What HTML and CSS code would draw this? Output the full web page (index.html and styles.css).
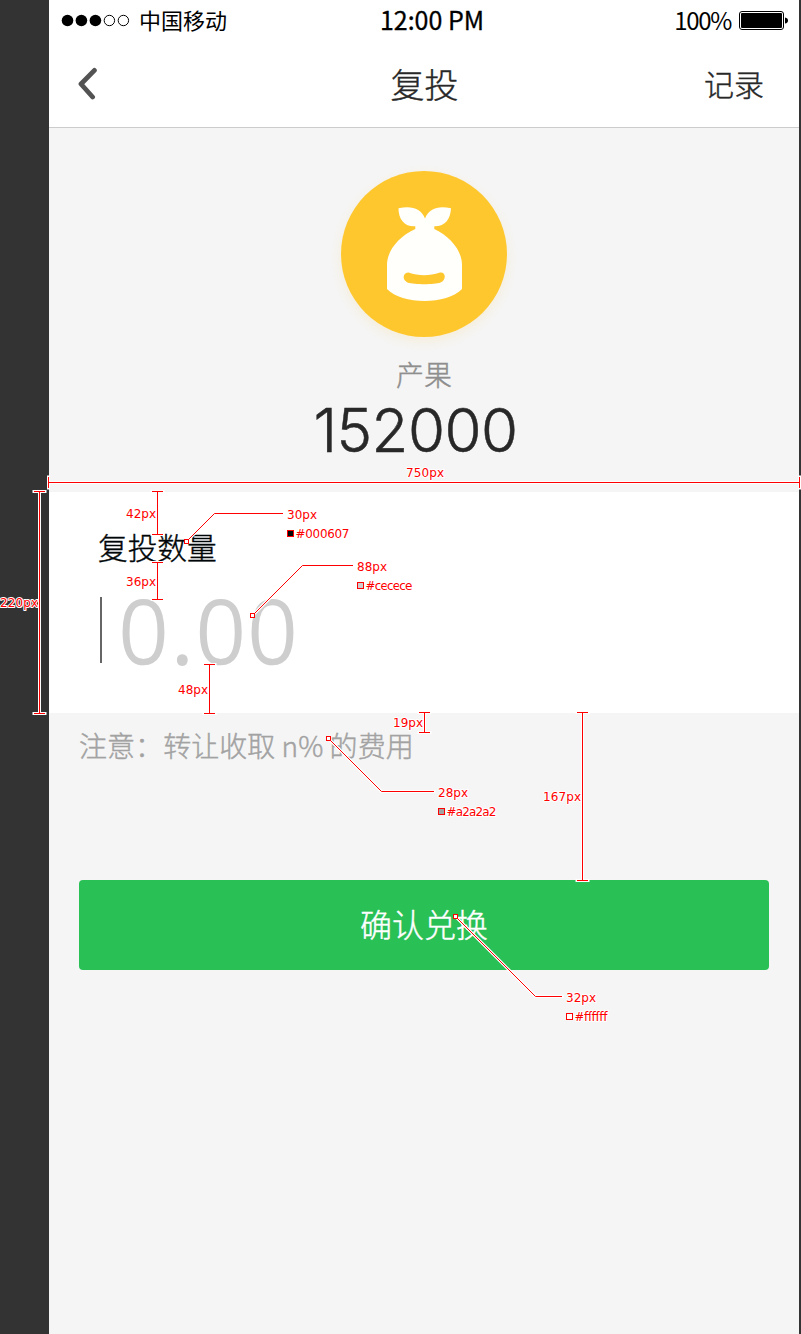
FILE: index.html
```html
<!DOCTYPE html>
<html lang="zh-CN">
<head>
<meta charset="utf-8">
<title>复投</title>
<link rel="stylesheet" href="styles.css">
</head>
<body>
<div class="board">
  <main class="phone">
    <header class="header">
      <div class="status">
        <div class="carrier">
          <svg class="signal" width="70" height="14" viewBox="0 0 70 14">
            <g fill="#000"><circle cx="6.5" cy="7.500" r="5.800"/><circle cx="20.400" cy="7.500" r="5.800"/><circle cx="34.400" cy="7.500" r="5.800"/></g>
            <g fill="none" stroke="#000"><circle cx="48.400" cy="7.500" r="5.200"/><circle cx="62.400" cy="7.500" r="5.200"/></g>
          </svg>
          <span class="carrier-name">中国移动</span>
        </div>
        <div class="clock">12:00 PM</div>
        <div class="power">
          <span class="percent">100%</span>
          <svg class="battery" width="50" height="20" viewBox="0 0 50 20">
            <rect x=".5" y=".5" width="44" height="18" rx="2.5" fill="#fff" stroke="#000"/>
            <rect x="2" y="2" width="41" height="15" rx="1" fill="#000"/>
            <path d="M46 6.5Q49 7 49 9.5T46 12.5Z" fill="#000"/>
          </svg>
        </div>
      </div>
      <nav class="nav">
        <svg class="back" width="20" height="34" viewBox="0 0 20 34"><path d="M16.400 3.400L3 17L14.600 30" fill="none" stroke="#535353" stroke-width="4.800" stroke-linecap="round" stroke-linejoin="round"/></svg>
        <h1 class="title">复投</h1>
        <a class="record">记录</a>
      </nav>
    </header>

    <section class="asset">
      <div class="badge">
        <svg width="166" height="166" viewBox="0 0 166 166">
          <path fill="#fffffc" fill-rule="evenodd" d="M57.500 37.300C70 34.500 80 37 84 47.500C88 37 98 34.500 110 37.300C109.500 48 104.500 55.500 93.300 55.300V58C110 66 121 80 121 94V118C106 134 61 134 46 118V94C46 80 57 66 74.300 58V55.300C63 56 57.500 48 57.500 37.300ZM67.500 101.500C62 101 60.500 109 66.500 111.500C74 113.800 93 113.800 99.500 111.500C105.500 109 105 100.500 99 101.500C88 105.200 78 105.200 67.500 101.500Z"/>
        </svg>
      </div>
      <p class="asset-name">产果</p>
      <p class="asset-total">152000</p>
    </section>

    <section class="amount">
      <label class="amount-label">复投数量</label>
      <div class="amount-field"><span class="caret"></span><span class="placeholder">0<span class="point">.</span>00</span></div>
    </section>

    <p class="notice">注意：转让收取 n% 的费用</p>
    <button class="confirm">确认兑换</button>
  </main>

  <svg class="specs" width="801" height="1334" viewBox="0 0 801 1334">
    <defs>
      <path id="marks" d="M48.500 477V488M48.500 482.500H799.500M799.500 477V488
        M34 491.500H45M39.500 491.500V713.500M34 713.500H45
        M152 491.500H163M157.500 491.500V534.500M152 534.500H163
        M152 562.500H163M157.500 562.500V599.500M152 599.500H163
        M204 664.500H215M209.500 664.500V713.500M204 713.500H215
        M419 712.500H430M424.500 712.500V732.500M419 732.500H430
        M577 712.500H588M582.500 712.500V880.500M577 880.500H588"/>
      <path id="leaders" d="M188 540L214.500 513.500H283M254 614L302.500 565.500H353M330 740L381.500 791.500H434M457 918L535.500 996.500H562"/>
    </defs>
    <use href="#marks" class="halo"/>
    <use href="#leaders" class="halo"/>
    <use href="#marks" class="line crisp"/>
    <use href="#leaders" class="line"/>
    <g class="pin">
      <rect x="184.500" y="539.500" width="4" height="4"/>
      <rect x="250.500" y="613.500" width="4" height="4"/>
      <rect x="326.500" y="736.500" width="4" height="4"/>
      <rect x="453.500" y="914.500" width="4" height="4"/>
    </g>
    <g class="swatch">
      <rect x="287.500" y="530.500" width="6" height="6" fill="#000607"/>
      <rect x="357.500" y="582.500" width="6" height="6" fill="#cecece"/>
      <rect x="438.500" y="808.500" width="6" height="6" fill="#a2a2a2"/>
      <rect x="566.500" y="1013.500" width="6" height="6" fill="#fff"/>
    </g>
    <g class="note">
      <text x="406" y="477" textLength="38">750px</text>
      <text x="0" y="607" textLength="38">220px</text>
      <text x="126" y="518" textLength="30">42px</text>
      <text x="126" y="586" textLength="30">36px</text>
      <text x="178" y="694" textLength="30">48px</text>
      <text x="393" y="727" textLength="30">19px</text>
      <text x="543" y="801" textLength="38">167px</text>
      <text x="287" y="519" textLength="30">30px</text>
      <text x="295.500" y="538" textLength="54">#000607</text>
      <text x="357" y="571" textLength="30">88px</text>
      <text x="365.500" y="590" textLength="47">#cecece</text>
      <text x="438" y="797" textLength="30">28px</text>
      <text x="446.500" y="816" textLength="50">#a2a2a2</text>
      <text x="566" y="1002" textLength="30">32px</text>
      <text x="574.500" y="1021" textLength="33">#ffffff</text>
    </g>
  </svg>
</div>
</body>
</html>
```

FILE: styles.css
```css
* { box-sizing: border-box; }
body { margin: 0; font-family: "Noto Sans CJK SC", sans-serif; }
h1, p { margin: 0; font-weight: 300; }
.board { position: relative; width: 801px; height: 1334px; padding: 0 2px 0 49px; background: #333; overflow: hidden; }
.phone { display: flex; flex-direction: column; height: 1334px; background: #f5f5f5; }
.title, .record, .asset-name, .amount-label, .notice, .confirm { -webkit-text-stroke: .4px currentColor; }

.header { height: 128px; background: #fff; border-bottom: 1px solid #ccc; }
.status { display: grid; grid-template-columns: 1fr auto 1fr; align-items: center; height: 40px; padding: 0 10px 0 12px; color: #000; line-height: 38px; }
.carrier { display: flex; align-items: center; gap: 8px; font-size: 22px; }
.carrier-name { margin-top: -2px; font-weight: 400; }
.clock { margin-top: -2px; padding-left: 14px; font-size: 25px; font-weight: 400; -webkit-text-stroke: .3px #000; }
.power { display: flex; align-items: center; justify-content: flex-end; gap: 8px; font-size: 24px; font-weight: 400; }
.percent { letter-spacing: -1.300px; }
.battery { margin-top: 1px; }
.nav { display: grid; grid-template-columns: 1fr auto 1fr; align-items: center; height: 87px; padding: 0 35px 0 29px; color: #282828; }
.title { padding-left: 7px; font-size: 34px; line-height: 50px; margin-top: 1px; }
.record { justify-self: end; font-size: 30px; font-weight: 300; line-height: 50px; margin-top: -2px; }

.asset { display: flex; flex-direction: column; align-items: center; height: 364px; padding-top: 43px; }
.badge { width: 166px; height: 166px; border-radius: 50%; background: #ffc72e; box-shadow: 0 4px 12px rgba(255, 199, 46, .14); }
.badge svg { display: block; }
.asset-name { margin-top: 17px; font-size: 28px; line-height: 40px; color: #8e8e8e; }
.asset-total { margin-top: 10px; padding-right: 17px; font-family: Inter, sans-serif; font-size: 60px; font-weight: 300; line-height: 52px; letter-spacing: -.500px; color: #282828; -webkit-text-stroke: .5px #282828; }

.amount { display: flex; flex-direction: column; height: 221px; padding: 34px 49px 0; background: #fff; }
.amount-label { font-size: 29.700px; font-weight: 300; line-height: 42px; color: #000607; }
.amount-field { display: flex; align-items: center; gap: 17px; height: 66px; margin-top: 29px; padding-left: 2px; }
.caret { width: 2px; height: 66px; background: #666; }
.placeholder { font-family: "Open Sans", sans-serif; font-size: 86px; font-weight: 300; line-height: 66px; letter-spacing: 2.800px; color: #cecece; -webkit-text-stroke: 2.600px #cecece; }
.point { padding: 0 1px; -webkit-text-stroke-width: 4px; }

.notice { margin: 11px 29px 0 30px; font-size: 28px; line-height: 42px; letter-spacing: .05px; color: #a2a2a2; }
.confirm { height: 90px; margin: 114px 30px 0; padding: 0 0 4px; border: 0; border-radius: 4px; background: #29c056; color: #fff; font: 300 32px/86px "Noto Sans CJK SC", sans-serif; }

.specs { position: absolute; top: 0; left: 0; }
.halo { fill: none; stroke: #fff; stroke-width: 3; stroke-linecap: square; }
.line { fill: none; stroke: #f00; stroke-width: 1; }
.crisp { shape-rendering: crispEdges; }
.pin { fill: #fff; stroke: #f00; }
.swatch { stroke: #f00; }
.note { font: 12px "DejaVu Sans", sans-serif; fill: #f00; stroke: #fff; stroke-width: 2px; paint-order: stroke; stroke-linejoin: round; }
```
